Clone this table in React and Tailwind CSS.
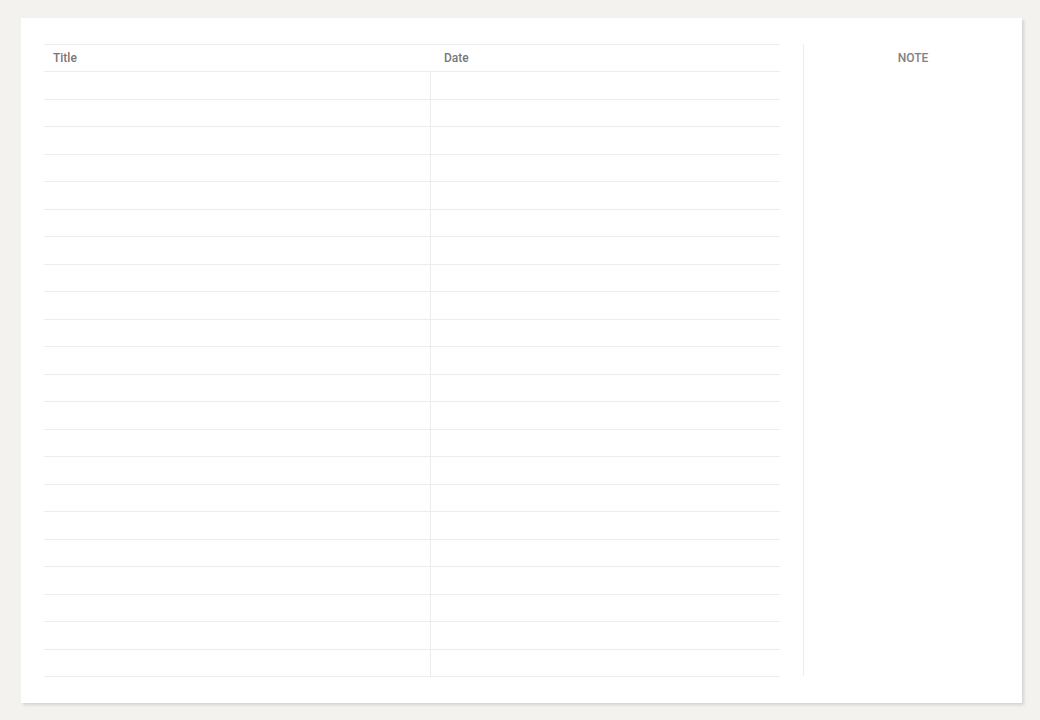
const ROWS = 22

export default function App() {
  return (
    <div className="w-[1040px] h-[720px] bg-[#f3f2ee] pt-[18px] pl-[21px]" style={{ fontFamily: 'Roboto, "Noto Sans", "Liberation Sans", sans-serif' }}>
      <div className="w-[1001px] h-[685px] bg-white shadow-[2px_2px_3px_rgba(0,0,0,0.13)] flex pt-[26px] pl-[23px]">
        {/* log table */}
        <div className="w-[736px] h-[633px] flex flex-col">
          <div className="h-[28px] flex items-center border-y border-[#ececec] text-[12px] font-medium text-[#777]">
            <div className="w-[387px] pl-[9px]">Title</div>
            <div className="pl-[13px]">Date</div>
          </div>
          {Array.from({ length: ROWS }).map((_, i) => (
            <div key={i} className="flex-1 flex border-b border-[#ececec]">
              <div className="w-[387px] border-r border-[#ececec]" />
              <div className="flex-1" />
            </div>
          ))}
        </div>

        {/* notes */}
        <div className="ml-[23px] h-[632px] flex-1 border-l border-[#ececec]">
          <div className="h-[28px] flex items-center justify-center text-[12px] font-medium text-[#808080]">
            NOTE
          </div>
        </div>
      </div>
    </div>
  )
}
